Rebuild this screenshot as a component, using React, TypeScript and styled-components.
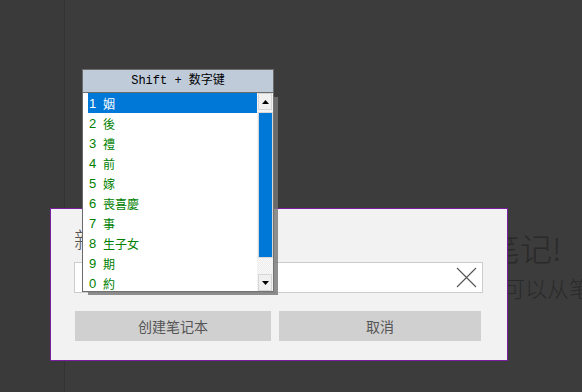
import styled, { createGlobalStyle } from 'styled-components';

const GlobalStyle = createGlobalStyle`
  html, body {
    margin: 0;
    padding: 0;
    background: #3c3c3c;
  }
  body {
    font-family: 'Noto Sans CJK SC', 'Noto Sans', sans-serif;
  }
`;

const Shell = styled.div`
  position: relative;
  display: flex;
  width: 582px;
  height: 392px;
  overflow: hidden;
  background: #3c3c3c;
`;

const Sidebar = styled.div`
  width: 64px;
  flex-shrink: 0;
  background: #3a3a3a;
  border-right: 1px solid #333333;
`;

const Main = styled.div`
  flex: 1;
  display: flex;
  flex-direction: column;
  padding-top: 227px;
  color: #2a2a2a;
  white-space: nowrap;
`;

const EmptyTitle = styled.div`
  font-size: 32px;
  line-height: 40px;
  font-weight: 300;
  margin-left: 199px;
`;

const EmptyHint = styled.div`
  font-size: 22px;
  line-height: 30px;
  font-weight: 300;
  margin: 5px 0 0 416px;
`;

const Dialog = styled.div`
  position: absolute;
  left: 50px;
  top: 208px;
  width: 409px;
  height: 137px;
  background: #f2f2f2;
  border: 1px solid #7b1fa2;
  padding: 14px 24px 0 23px;
  display: flex;
  flex-direction: column;
`;

const DialogTitle = styled.div`
  font-size: 22px;
  line-height: 30px;
  font-weight: 300;
  color: #555555;
`;

const InputBox = styled.div`
  margin-top: 9px;
  height: 29px;
  background: #ffffff;
  border: 1px solid #cccccc;
  display: flex;
  align-items: center;
  justify-content: flex-end;
  padding-right: 5px;
`;

const ClearIcon = styled.svg`
  width: 21px;
  height: 21px;
  display: block;
`;

const ButtonRow = styled.div`
  margin-top: 18px;
  display: flex;
  gap: 8px;
  padding-left: 1px;
`;

const Button = styled.button<{ $w: number }>`
  width: ${(p) => p.$w}px;
  height: 30px;
  border: none;
  background: #d0d0d0;
  color: #555555;
  font-family: 'Noto Sans CJK SC', sans-serif;
  font-size: 14px;
  padding: 0;
`;

const Candidates = styled.div`
  position: absolute;
  left: 82px;
  top: 69px;
  width: 190px;
  border: 1px solid #6b6b6b;
  background: #ffffff;
`;

const CandHeader = styled.div`
  height: 22px;
  background: #bfcbd9;
  border-bottom: 1px solid #6b6b6b;
  text-align: center;
  font-family: 'Liberation Mono', 'Noto Sans CJK SC', monospace;
  font-size: 12px;
  line-height: 22px;
  color: #000000;
`;

const CandBody = styled.div`
  position: relative;
  display: flex;
  height: 198px;
  box-shadow: 5px 4px 0 rgba(117, 117, 117, 0.81);
`;

const CandList = styled.div`
  flex: 1;
  overflow: hidden;
  padding-left: 5px;
`;

const CandRow = styled.div<{ $active?: boolean }>`
  display: flex;
  height: 20px;
  align-items: center;
  font-size: 12px;
  background: ${(p) => (p.$active ? '#0078d7' : 'transparent')};
  color: ${(p) => (p.$active ? '#ffffff' : '#008000')};
`;

const CandNum = styled.span`
  width: 14px;
  padding-left: 1px;
  font-family: 'Liberation Sans', sans-serif;
  font-size: 13px;
`;

const ScrollBar = styled.div`
  width: 16px;
  display: flex;
  flex-direction: column;
  background-color: #f4f4f4;
  background-image: repeating-conic-gradient(#ececec 0 25%, #fafafa 0 50%);
  background-size: 2px 2px;
`;

const ScrollBtn = styled.div`
  height: 15px;
  margin: 0 1px;
  background: #f0f0f0;
  border: 1px solid #d6d6d6;
  display: flex;
  align-items: center;
  justify-content: center;
`;

const Thumb = styled.div`
  height: 144px;
  margin: 2px 0 0 1px;
  background: #0078d7;
  border: 1px solid #d8d8d8;
`;

const Track = styled.div`
  flex: 1;
`;

const Arrow = ({ up }: { up?: boolean }) => (
  <svg width="7" height="4" viewBox="0 0 7 4">
    <polygon points={up ? '3.5,0 7,4 0,4' : '0,0 7,0 3.5,4'} fill="#000" />
  </svg>
);

const items = ['姻', '後', '禮', '前', '嫁', '喪喜慶', '事', '生子女', '期', '約'];

export default function App() {
  return (
    <>
      <GlobalStyle />
      <Shell>
        <Sidebar />
        <Main>
          <EmptyTitle>创建您的第一个笔记!</EmptyTitle>
          <EmptyHint>你可以从笔记本列表开始</EmptyHint>
        </Main>
        <Dialog>
          <DialogTitle>新建笔记本</DialogTitle>
          <InputBox>
            <ClearIcon viewBox="0 0 21 21">
              <path d="M1 1 L20 20 M20 1 L1 20" stroke="#555" strokeWidth="1.1" fill="none" />
            </ClearIcon>
          </InputBox>
          <ButtonRow>
            <Button $w={196}>创建笔记本</Button>
            <Button $w={202}>取消</Button>
          </ButtonRow>
        </Dialog>
        <Candidates>
          <CandHeader>Shift + 数字键</CandHeader>
          <CandBody>
            <CandList>
              {items.map((t, i) => (
                <CandRow key={i} $active={i === 0}>
                  <CandNum>{(i + 1) % 10}</CandNum>
                  <span>{t}</span>
                </CandRow>
              ))}
            </CandList>
            <ScrollBar>
              <ScrollBtn>
                <Arrow up />
              </ScrollBtn>
              <Thumb />
              <Track />
              <ScrollBtn>
                <Arrow />
              </ScrollBtn>
            </ScrollBar>
          </CandBody>
        </Candidates>
      </Shell>
    </>
  );
}
